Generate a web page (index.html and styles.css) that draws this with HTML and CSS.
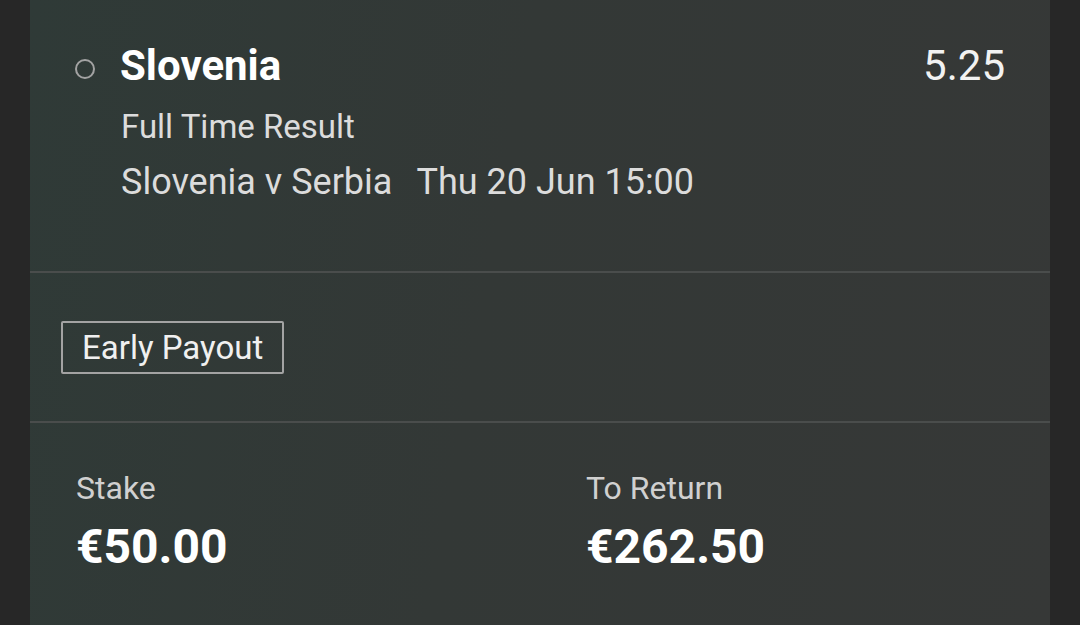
FILE: index.html
```html
<!DOCTYPE html>
<html>
<head>
<meta charset="utf-8">
<link rel="stylesheet" href="styles.css">
</head>
<body>
<div class="card">
  <section class="sel">
    <div class="sel-row">
      <span class="radio"></span>
      <span class="team">Slovenia</span>
      <span class="odds">5.25</span>
    </div>
    <div class="market">Full Time Result</div>
    <div class="event"><span>Slovenia v Serbia</span><span class="time">Thu 20 Jun 15:00</span></div>
  </section>
  <section class="payout">
    <div class="badge">Early Payout</div>
  </section>
  <section class="totals">
    <div class="col">
      <div class="label">Stake</div>
      <div class="amount">€50.00</div>
    </div>
    <div class="col">
      <div class="label">To Return</div>
      <div class="amount">€262.50</div>
    </div>
  </section>
</div>
</body>
</html>
```
FILE: styles.css
```css
html, body {
  margin: 0;
  padding: 0;
  background: #272727;
  width: 1080px;
  height: 625px;
  overflow: hidden;
  font-family: Roboto, "Liberation Sans", sans-serif;
}
.card {
  margin: 0 30px;
  height: 625px;
  background: linear-gradient(100deg, #2f3a37 0%, #333836 45%, #363837 100%);
  color: #e2e2e2;
}
.sel {
  height: 273px;
  box-sizing: border-box;
  padding: 41px 45px 0 45px;
  border-bottom: 2px solid #4a4d4c;
}
.sel-row {
  display: flex;
  align-items: center;
  height: 50px;
}
.radio {
  width: 16px;
  height: 16px;
  border: 2.5px solid #a3a3a3;
  border-radius: 50%;
  margin-right: 25px;
  margin-top: 5px;
  flex: none;
}
.team {
  font-size: 42px;
  line-height: 50px;
  font-weight: 700;
  color: #ffffff;
  flex: 1;
}
.odds {
  font-size: 42px;
  line-height: 50px;
  color: #f2f2f2;
}
.market {
  margin-top: 11px;
  padding-left: 46px;
  font-size: 33px;
  line-height: 50px;
  color: #dcdcdc;
}
.event {
  margin-top: 3px;
  padding-left: 46px;
  font-size: 36px;
  line-height: 55px;
  color: #dcdcdc;
}
.time {
  margin-left: 24px;
}
.payout {
  height: 150px;
  box-sizing: border-box;
  padding-left: 31px;
  display: flex;
  align-items: center;
  border-bottom: 2px solid #4a4d4c;
}
.badge {
  border: 2px solid #a3a3a3;
  border-radius: 2px;
  padding: 0 19px;
  height: 49px;
  line-height: 49px;
  font-size: 33px;
  color: #f0f0f0;
}
.totals {
  display: grid;
  grid-template-columns: 510px 1fr;
  padding: 45px 0 0 46px;
}
.label {
  font-size: 32px;
  line-height: 40px;
  color: #d0d0d0;
}
.amount {
  margin-top: 11px;
  font-size: 48px;
  line-height: 56px;
  font-weight: 700;
  color: #ffffff;
}
```
